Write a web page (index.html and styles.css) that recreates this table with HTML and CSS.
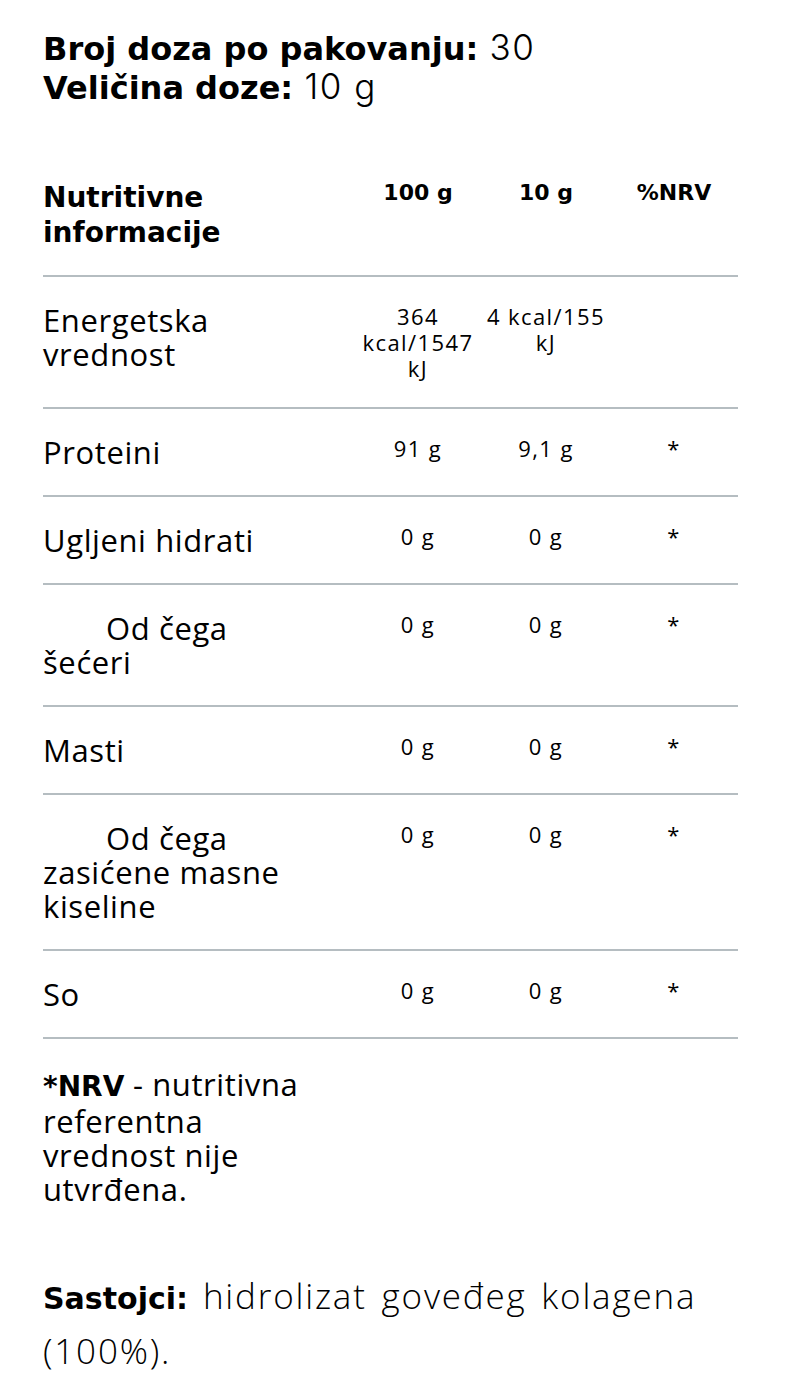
FILE: index.html
```html
<!DOCTYPE html>
<html lang="sr">
<head>
<meta charset="utf-8">
<link rel="stylesheet" href="styles.css">
</head>
<body>
<div class="page">
  <div class="dose">
    <p><b>Broj doza po pakovanju:</b> 30</p>
    <p><b>Veličina doze:</b> 10 g</p>
  </div>
  <div class="table">
    <div class="row head">
      <div class="label">Nutritivne informacije</div>
      <div class="val">100 g</div>
      <div class="val">10 g</div>
      <div class="val">%NRV</div>
    </div>
    <div class="row">
      <div class="label">Energetska vrednost</div>
      <div class="val">364 kcal/1547 kJ</div>
      <div class="val">4 kcal/155 kJ</div>
      <div class="val"></div>
    </div>
    <div class="row">
      <div class="label">Proteini</div>
      <div class="val">91 g</div>
      <div class="val">9,1 g</div>
      <div class="val">*</div>
    </div>
    <div class="row">
      <div class="label">Ugljeni hidrati</div>
      <div class="val">0 g</div>
      <div class="val">0 g</div>
      <div class="val">*</div>
    </div>
    <div class="row">
      <div class="label sub">Od čega šećeri</div>
      <div class="val">0 g</div>
      <div class="val">0 g</div>
      <div class="val">*</div>
    </div>
    <div class="row">
      <div class="label">Masti</div>
      <div class="val">0 g</div>
      <div class="val">0 g</div>
      <div class="val">*</div>
    </div>
    <div class="row">
      <div class="label sub">Od čega zasićene masne kiseline</div>
      <div class="val">0 g</div>
      <div class="val">0 g</div>
      <div class="val">*</div>
    </div>
    <div class="row">
      <div class="label">So</div>
      <div class="val">0 g</div>
      <div class="val">0 g</div>
      <div class="val">*</div>
    </div>
    <div class="note"><b>*NRV</b> - nutritivna referentna vrednost nije utvrđena.</div>
  </div>
  <p class="ingredients"><b>Sastojci:</b> hidrolizat goveđeg kolagena (100%).</p>
</div>
</body>
</html>
```
FILE: styles.css
```css
html, body {
  margin: 0;
  padding: 0;
  background: #ffffff;
  color: #000000;
}
.page {
  width: 695px;
  padding: 29px 0 0 43px;
  font-family: "Open Sans", "Noto Sans", sans-serif;
}
.dose p {
  margin: 0;
  font-family: "Inter", sans-serif;
  font-weight: 300;
  font-size: 35px;
  line-height: 37px;
  letter-spacing: 1.5px;
}
.dose b {
  font-family: "DejaVu Sans", sans-serif;
  font-weight: 700;
  font-size: 32px;
  letter-spacing: 0;
}
.table {
  margin-top: 73px;
}
.row {
  display: grid;
  grid-template-columns: 311px 128px 128px 128px;
  border-bottom: 2px solid #b5bdc1;
  padding: 26px 0;
}
.row.head {
  padding: 0 0 25px;
}
.label {
  font-size: 31px;
  line-height: 34px;
  letter-spacing: 0.6px;
  padding-right: 40px;
}
.label.sub {
  text-indent: 63px;
}
.val {
  font-size: 22px;
  line-height: 26px;
  letter-spacing: 1.4px;
  text-align: center;
  padding: 0 2px;
}
.head .label {
  font-family: "DejaVu Sans", sans-serif;
  font-weight: 700;
  font-size: 28px;
  line-height: 35px;
  letter-spacing: 0;
}
.head .val {
  font-family: "DejaVu Sans", sans-serif;
  font-weight: 700;
  font-size: 22px;
  line-height: 26px;
  letter-spacing: 0;
}
.note {
  width: 290px;
  padding-top: 28px;
  font-size: 31px;
  line-height: 34px;
  letter-spacing: 0.6px;
}
.note b {
  font-family: "DejaVu Sans", sans-serif;
  font-weight: 700;
  font-size: 28px;
  line-height: 34px;
  letter-spacing: 0;
}
.ingredients {
  margin: 64px 0 0;
  font-weight: 300;
  font-size: 35px;
  line-height: 52px;
  letter-spacing: 1.8px;
  word-spacing: 4px;
}
.ingredients b {
  font-family: "DejaVu Sans", sans-serif;
  font-weight: 700;
  font-size: 30px;
  letter-spacing: 0;
  word-spacing: 0;
}
```
